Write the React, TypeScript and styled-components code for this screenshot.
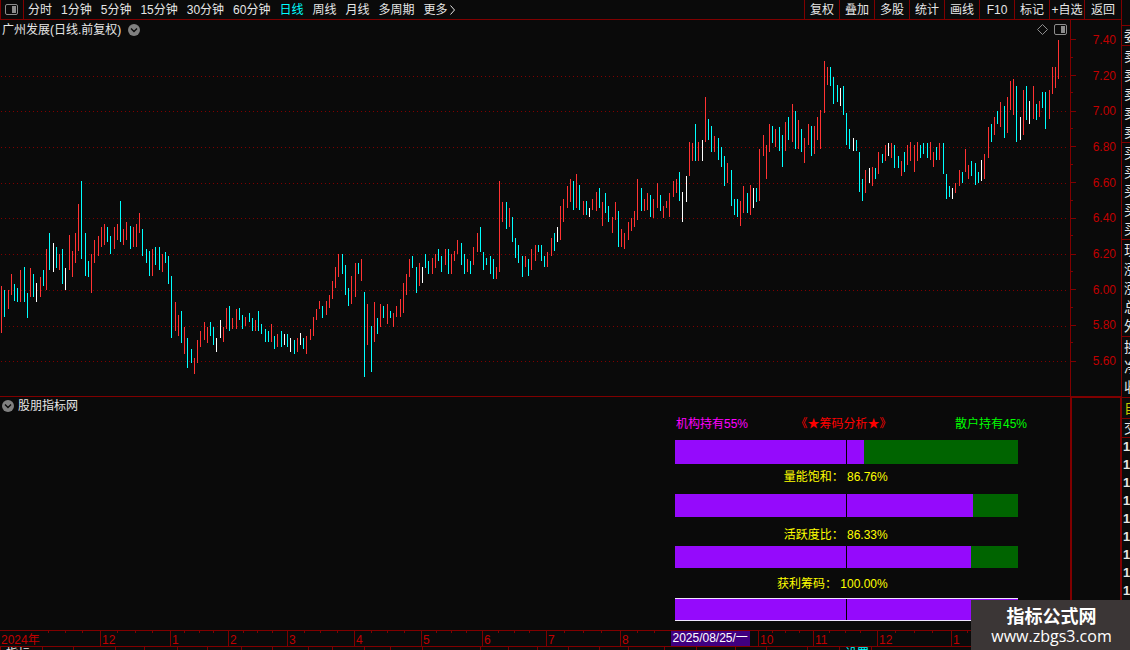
import React from 'react';
import styled, { createGlobalStyle } from 'styled-components';

const c = {
  bg: '#0a0a0a',
  line: '#800000',
  axis: '#c00000',
  text: '#e6e6e6',
  up: '#ff3232',
  down: '#00ffff',
  flat: '#ffffff',
  purple: '#950afc',
  green: '#006400',
};

const GlobalStyle = createGlobalStyle`
  *, *::before, *::after { box-sizing: border-box; }
  body {
    margin: 0;
    background: ${c.bg};
    color: ${c.text};
    font: 12px/18px "Liberation Sans", "Noto Sans CJK SC", sans-serif;
    overflow: hidden;
  }
  button { font: inherit; color: inherit; background: none; border: 0; padding: 0; margin: 0; white-space: nowrap; cursor: pointer; }
  svg { flex-shrink: 0; }
`;

const Page = styled.div`
  display: flex;
  height: 100vh;
  overflow: hidden;
`;

const Terminal = styled.main`
  flex: 1;
  min-width: 0;
  display: grid;
  grid-template-columns: minmax(0, 1fr);
  grid-template-rows: 20px minmax(0, 377fr) minmax(0, 233fr) 16px 4px;
`;

const Toolbar = styled.header`
  display: flex;
  border-bottom: 1px solid ${c.line};
  border-left: 1px solid ${c.line};
  min-width: 0;
`;

const PanelToggle = styled.button`
  width: 23px;
  padding-left: 4px;
  border-right: 1px solid ${c.line};
  display: flex;
  align-items: center;
`;

const Periods = styled.nav`
  display: flex;
  gap: 9px;
  padding-left: 4px;
  flex: 1;
`;

const Period = styled.button<{ $active?: boolean }>`
  display: flex;
  align-items: center;
  color: ${p => (p.$active ? c.down : c.text)};
`;

const Tools = styled.div`
  display: flex;
`;

const Tool = styled.button`
  width: 35px;
  border-left: 1px solid ${c.line};
  &:last-child { width: 37px; }
`;

const ChartRow = styled.section`
  display: flex;
  min-height: 0;
  border-bottom: 1px solid ${c.line};
`;

const Plot = styled.div`
  flex: 1;
  min-width: 0;
  display: flex;
  flex-direction: column;
`;

const PlotHeader = styled.div`
  display: flex;
  align-items: center;
  height: 20px;
  gap: 7px;
  padding: 0 3px 1px 2px;
`;

const Title = styled.h1`
  margin: 0;
  font-size: 12px;
  font-weight: 400;
  line-height: 18px;
`;

const HeaderIcons = styled.div`
  display: flex;
  align-items: center;
  gap: 6px;
  margin-left: auto;
`;

const PlotSvg = styled.svg`
  display: block;
  flex: 1;
  width: 100%;
  min-height: 0;
`;

const PriceAxis = styled.div`
  width: 51px;
  border-left: 1px solid ${c.line};
  display: grid;
  grid-template-rows: repeat(10, minmax(0, 1fr));
  padding: 2px 0 17px;
`;

const PriceRow = styled.div`
  position: relative;
  display: flex;
  align-items: center;
  justify-content: space-between;
  padding-right: 5px;
  color: ${c.axis};
  &::before {
    content: "";
    width: 5px;
    height: 1px;
    background: ${c.line};
  }
  &:not(:last-child)::after {
    content: "";
    position: absolute;
    left: 0;
    bottom: 0;
    width: 2px;
    height: 1px;
    background: ${c.line};
  }
`;

const IndicatorRow = styled.section`
  display: flex;
  min-height: 0;
`;

const Indicator = styled.div`
  flex: 1;
  min-width: 0;
  display: flex;
  justify-content: space-between;
  padding-right: 52px;
`;

const IndicatorTitle = styled.div`
  display: flex;
  align-items: center;
  height: 17px;
  gap: 4px;
  padding-left: 2px;
`;

const IndicatorSide = styled.div`
  width: 51px;
  border: solid ${c.line};
  border-width: 1px 1px 0 2px;
`;

const Chips = styled.div`
  width: 32%;
  min-width: 343px;
  padding-top: 18px;
`;

const ChipsHeader = styled.div`
  display: grid;
  grid-template-columns: 1fr auto 1fr;
  margin-right: -9px;
  height: 25px;
`;

const ChipText = styled.span<{ $color: string; $end?: boolean }>`
  color: ${p => p.$color};
  padding: 0 16px 0 1px;
  ${p => p.$end && 'padding: 0; justify-self: end;'}
`;

const Metric = styled.div<{ $height: number; $top: number }>`
  height: ${p => p.$height}px;
  padding-top: ${p => p.$top}px;
  padding-right: 38%;
  text-align: right;
  white-space: nowrap;
  color: #ffff00;
`;

const Bar = styled.div<{ $height: number; $framed?: boolean }>`
  position: relative;
  height: ${p => p.$height}px;
  background: ${c.green};
  border: solid #f0e6ff;
  border-width: ${p => (p.$framed ? '1px 0' : '0')};
  &::after {
    content: "";
    position: absolute;
    right: 50%;
    top: 0;
    bottom: 0;
    width: 1px;
    background: #000;
  }
`;

const Fill = styled.div`
  height: 100%;
  background: ${c.purple};
`;

const DateAxis = styled.div`
  position: relative;
  display: grid;
  grid-template-columns: 100fr 70fr 58fr 59fr 67fr 67fr 61fr 64fr 74fr 69fr 69fr 55fr 64fr 74fr 64fr 106fr;
  border-top: 1px solid ${c.line};
  color: ${c.axis};
  line-height: 14px;
`;

const Month = styled.div<{ $first?: boolean }>`
  min-width: 0;
  border-left: ${p => (p.$first ? '0' : `1px solid ${c.line}`)};
`;

const Ticks = styled.div<{ $first?: boolean }>`
  display: grid;
  grid-template-columns: repeat(4, 1fr);
  height: 2px;
  margin-left: ${p => (p.$first ? '32%' : '0')};
  span { border-right: 1px solid ${c.line}; }
  span:last-child { border-right: 0; }
`;

const MonthLabel = styled.div`
  padding-left: 1px;
  height: 13px;
  white-space: nowrap;
`;

const DateCursor = styled.div`
  position: absolute;
  left: 59.9%;
  top: 0;
  height: 15px;
  width: 79px;
  padding-left: 1px;
  background: #400080;
  color: #fff;
  white-space: nowrap;
  overflow: hidden;
`;

const TabStrip = styled.div`
  display: grid;
  grid-template-columns: 42fr 31fr 42fr 29fr 33fr 30fr 34fr 31fr 36fr 24fr 32fr 26fr 32fr 58fr 28fr 29fr 31fr 31fr 29fr 36fr 32fr 39fr 31fr 41fr 32fr 32fr 250fr;
  border-top: 1px solid ${c.line};
  overflow: hidden;
`;

const Tab = styled.div<{ $active?: boolean }>`
  min-width: 0;
  margin-top: -2px;
  padding-left: 5px;
  border-left: 1px solid ${c.line};
  white-space: nowrap;
  color: ${p => (p.$active ? c.down : c.text)};
`;

const Side = styled.aside`
  width: 9px;
  border-left: 1px solid ${c.line};
  padding-top: 25px;
  overflow: hidden;
  white-space: nowrap;
`;

const SideGroup = styled.div<{ $height: number; $color?: string }>`
  height: ${p => p.$height}px;
  display: flex;
  flex-direction: column;
  justify-content: space-around;
  padding-left: 2px;
  border-top: 1px solid ${c.line};
  color: ${p => p.$color || c.text};
  font-size: 14px;
`;

const Ones = styled.div`
  padding-left: 1px;
  border-top: 1px solid ${c.line};
  font: bold 13px/18px "Liberation Sans", sans-serif;
`;

const Watermark = styled.div`
  position: absolute;
  right: 0;
  bottom: 0;
  width: 159px;
  height: 50px;
  padding: 4px 0 0 2px;
  background: #3b3636;
  color: #fff;
  text-align: center;
`;

const MarkName = styled.div`
  font: bold 18px/22px "Noto Sans CJK SC", sans-serif;
`;

const MarkLink = styled.a`
  display: block;
  font: 16px/20px "Open Sans", sans-serif;
  color: inherit;
  text-decoration: none;
`;

/* One bar per day: x, high, low, kind (r = up, c = down, w = unchanged). */
const DATA = `
1 286 333 r,4 290 317 c,8 290 309 r,11 274 295 r,14 284 301 c,17 288 302 c,20 270 302 r,24 267 302 c,
27 293 318 c,30 268 297 r,33 274 297 c,36 283 302 w,40 277 297 r,43 270 286 c,46 249 290 r,49 233 270 c,
53 243 272 w,56 247 268 c,59 254 270 r,62 249 284 c,65 268 290 w,69 235 270 r,72 251 277 r,75 233 263 r,
78 204 251 r,81 181 259 c,85 233 276 c,88 261 277 c,91 254 293 r,94 240 263 r,98 236 256 r,101 227 247 r,
104 224 245 r,107 227 242 c,110 236 254 c,114 227 249 r,117 224 240 r,120 201 242 c,123 229 245 r,126 222 240 r,
130 226 249 c,133 227 247 r,136 224 247 r,139 213 233 r,142 229 256 c,146 249 263 c,149 251 276 c,152 249 276 r,
155 247 265 c,159 247 270 c,162 254 272 r,165 252 263 c,168 256 284 c,171 276 338 c,175 302 331 r,178 315 336 r,
181 311 343 c,184 327 354 r,187 338 368 c,191 349 363 c,194 358 374 r,197 340 363 r,200 331 347 r,204 322 340 r,
207 327 343 r,210 322 336 c,213 327 345 c,216 338 352 w,220 320 338 w,223 327 342 r,226 308 329 r,229 306 331 c,
232 318 329 r,236 309 329 r,239 308 320 c,242 315 329 c,245 317 326 r,249 313 322 c,252 318 331 c,255 320 331 r,
258 311 331 c,261 324 334 c,265 329 342 c,268 331 342 c,271 324 342 r,274 336 349 c,277 334 347 r,281 331 347 c,
284 334 345 w,287 334 347 c,290 338 352 w,294 340 354 c,297 338 352 r,300 333 345 w,303 338 349 c,306 336 354 r,
310 329 340 r,313 317 336 r,316 309 320 r,319 301 309 r,322 306 318 c,326 301 315 r,329 295 308 r,332 281 299 r,
335 267 288 r,338 254 277 r,342 254 274 c,345 265 295 c,348 288 306 c,351 276 304 r,355 263 297 r,358 263 274 c,
361 259 281 r,364 292 377 c,367 304 345 r,371 326 372 c,374 302 342 r,377 318 334 c,380 304 327 r,383 306 318 c,
387 304 324 r,390 311 318 c,393 313 327 r,396 306 317 r,400 299 317 r,403 283 313 r,406 274 295 r,409 259 277 r,
412 256 268 c,416 267 293 c,419 263 286 r,422 267 283 w,425 254 268 c,428 261 274 c,432 258 274 r,435 254 268 r,
438 249 261 c,441 256 272 c,445 249 265 r,448 249 274 c,451 254 274 r,454 251 261 r,457 240 254 r,461 243 265 c,
464 254 274 c,467 259 272 r,470 261 274 c,473 247 265 r,477 233 252 r,480 227 252 c,483 252 270 c,486 258 265 c,
490 256 274 c,493 259 279 c,496 267 279 r,499 181 272 r,502 202 222 r,506 202 229 c,509 208 227 r,512 217 242 c,
515 238 258 c,518 245 263 c,522 256 277 c,525 256 267 r,528 259 276 c,531 249 270 r,535 245 261 r,538 245 252 c,
541 245 261 c,544 256 267 c,547 252 267 r,551 238 256 r,554 233 251 c,557 227 242 w,560 206 240 r,563 199 222 r,
567 186 208 r,570 179 202 r,573 181 210 c,576 174 208 r,579 185 210 c,583 201 215 r,586 201 215 c,589 208 217 w,
592 199 210 r,596 192 211 r,599 188 208 c,602 202 226 r,605 193 213 c,608 206 222 c,612 217 233 r,615 202 220 r,
618 211 247 c,621 229 247 r,624 233 249 r,628 222 240 r,631 218 231 r,634 211 227 r,637 179 220 r,641 188 211 c,
644 199 211 r,647 193 210 r,650 195 217 c,653 199 218 r,657 183 208 r,660 195 211 c,663 206 218 r,666 201 208 r,
669 193 217 r,673 181 197 r,676 179 193 r,679 172 201 c,682 192 222 w,686 176 202 w,689 142 176 r,692 143 161 r,
695 124 161 c,698 142 161 r,702 140 161 w,705 97 142 r,708 119 140 c,711 126 152 c,714 136 152 r,718 138 160 c,
721 147 167 c,724 156 186 c,727 163 183 r,731 170 206 c,734 199 215 c,737 199 217 c,740 201 226 r,743 186 213 r,
747 193 213 c,750 185 215 r,753 188 208 w,756 188 202 c,759 149 201 r,763 135 156 r,766 145 179 r,769 124 152 r,
772 126 143 c,775 129 147 r,779 127 151 c,782 135 167 c,785 122 151 r,788 117 140 c,792 104 142 r,795 111 149 c,
798 120 149 r,801 129 152 c,804 138 163 r,808 124 145 r,811 126 156 c,814 126 154 r,817 117 140 r,820 110 149 r,
824 61 113 r,827 67 85 r,830 67 86 c,833 77 104 c,837 85 102 c,840 88 106 w,843 86 115 c,846 113 145 c,
849 129 149 c,853 138 151 w,856 140 151 c,859 152 192 c,862 179 201 c,865 170 193 r,869 168 183 w,872 167 186 r,
875 168 179 c,878 152 174 r,882 154 163 c,885 145 161 r,888 143 156 w,891 143 158 r,894 145 168 c,898 156 168 c,
901 161 176 r,904 152 172 c,907 145 165 r,910 142 161 r,914 145 172 r,917 142 161 r,920 145 158 c,923 143 154 c,
927 143 158 c,930 142 160 r,933 152 167 r,936 147 160 c,939 143 160 r,943 143 174 c,946 174 199 c,949 186 197 c,
952 188 199 w,955 183 193 r,959 170 186 r,962 172 183 c,965 149 172 r,968 165 179 r,971 161 176 c,975 163 185 c,
978 172 183 c,981 160 181 w,984 154 179 r,988 127 158 r,991 124 142 c,994 117 135 r,997 111 124 c,1000 102 127 r,
1004 106 138 c,1007 97 133 r,1010 81 110 r,1013 79 115 r,1016 86 142 c,1020 117 140 w,1023 90 135 r,1026 86 120 c,
1029 101 124 w,1033 86 119 r,1036 104 120 c,1039 101 117 r,1042 92 108 c,1045 92 129 c,1049 90 119 r,1052 67 94 r,
1055 67 88 r,1058 40 79 r`;

const DAYS = DATA.split(',').map(row => {
  const [x, high, low, kind] = row.trim().split(' ');
  return { x: +x, high: +high, low: +low, kind };
});

const KIND_COLOR: Record<string, string> = { r: c.up, c: c.down, w: c.flat };
const GRID = [76, 111, 147, 183, 218, 254, 290, 326, 361];
const PRICES = ['7.40', '7.20', '7.00', '6.80', '6.60', '6.40', '6.20', '6.00', '5.80', '5.60'];
const PERIODS = ['分时', '1分钟', '5分钟', '15分钟', '30分钟', '60分钟', '日线', '周线', '月线', '多周期'];
const TOOLS = ['复权', '叠加', '多股', '统计', '画线', 'F10', '标记', '+自选', '返回'];
const MONTHS = ['2024年', '12', '1', '2', '3', '4', '5', '6', '7', '8', '', '10', '11', '12', '1', ''];
const TAB_COUNT = 27;
const TAB_LABELS: Record<number, string> = { 0: '指标', 25: '设置' };

const PanelIcon = () => (
  <svg width="13" height="11" viewBox="0 0 13 11" aria-hidden="true">
    <rect x="0.5" y="0.5" width="12" height="10" rx="1.5" fill="none" stroke="#8c8c8c" />
    <rect x="7" y="2" width="4" height="7" fill="#8c8c8c" />
  </svg>
);

const DropIcon = () => (
  <svg width="12" height="12" viewBox="0 0 12 12" aria-hidden="true">
    <circle cx="6" cy="6" r="6" fill="#808080" />
    <path d="M3 4.5 L6 7.5 L9 4.5" fill="none" stroke="#0a0a0a" strokeWidth="1.4" />
  </svg>
);

const DiamondIcon = () => (
  <svg width="11" height="11" viewBox="0 0 11 11" aria-hidden="true">
    <path d="M5.5 0.5 L10.5 5.5 L5.5 10.5 L0.5 5.5 Z" fill="none" stroke="#8c8c8c" />
  </svg>
);

const MoreIcon = () => (
  <svg width="8" height="10" viewBox="0 0 8 10" aria-hidden="true">
    <path d="M2.5 0.5 L6.5 5 L2.5 9.5" fill="none" stroke="#e6e6e6" />
  </svg>
);

export default function App() {
  return (
    <Page>
      <GlobalStyle />
      <Terminal>
        <Toolbar>
          <PanelToggle aria-label="面板"><PanelIcon /></PanelToggle>
          <Periods>
            {PERIODS.map(p => <Period key={p} $active={p === '日线'}>{p}</Period>)}
            <Period>更多<MoreIcon /></Period>
          </Periods>
          <Tools>{TOOLS.map(t => <Tool key={t}>{t}</Tool>)}</Tools>
        </Toolbar>

        <ChartRow>
          <Plot>
            <PlotHeader>
              <Title>广州发展(日线.前复权)</Title>
              <DropIcon />
              <HeaderIcons><DiamondIcon /><PanelIcon /></HeaderIcons>
            </PlotHeader>
            <PlotSvg viewBox="0 40 1070 356" preserveAspectRatio="none" shapeRendering="crispEdges">
              {GRID.map(y => (
                <line key={y} x1="1" x2="1067" y1={y + 0.5} y2={y + 0.5} stroke={c.line} strokeDasharray="1 3" />
              ))}
              {DAYS.map(d => (
                <rect key={d.x} x={d.x} y={d.high} width="1" height={d.low - d.high} fill={KIND_COLOR[d.kind]} />
              ))}
            </PlotSvg>
          </Plot>
          <PriceAxis>{PRICES.map(p => <PriceRow key={p}>{p}</PriceRow>)}</PriceAxis>
        </ChartRow>

        <IndicatorRow>
          <Indicator>
            <IndicatorTitle><DropIcon />股朋指标网</IndicatorTitle>
            <Chips>
              <ChipsHeader>
                <ChipText $color="#ff00ff">机构持有55%</ChipText>
                <ChipText $color="#ff0000">《★筹码分析★》</ChipText>
                <ChipText $color="#00ff00" $end>散户持有45%</ChipText>
              </ChipsHeader>
              <Bar $height={24}><Fill style={{ width: '55%' }} /></Bar>
              <Metric $height={30} $top={4}>量能饱和： 86.76%</Metric>
              <Bar $height={23}><Fill style={{ width: '86.76%' }} /></Bar>
              <Metric $height={29} $top={9}>活跃度比： 86.33%</Metric>
              <Bar $height={22}><Fill style={{ width: '86.33%' }} /></Bar>
              <Metric $height={30} $top={7}>获利筹码： 100.00%</Metric>
              <Bar $height={23} $framed><Fill style={{ width: '100%' }} /></Bar>
            </Chips>
          </Indicator>
          <IndicatorSide />
        </IndicatorRow>

        <DateAxis>
          {MONTHS.map((m, i) => (
            <Month key={i} $first={i === 0}>
              <Ticks $first={i === 0}><span /><span /><span /><span /></Ticks>
              <MonthLabel>{m}</MonthLabel>
            </Month>
          ))}
          <DateCursor>2025/08/25/一</DateCursor>
        </DateAxis>

        <TabStrip>
          {Array.from({ length: TAB_COUNT }, (_, i) => <Tab key={i} $active={i === 25}>{TAB_LABELS[i]}</Tab>)}
        </TabStrip>
      </Terminal>

      <Side>
        <SideGroup $height={20}><span>委</span></SideGroup>
        <SideGroup $height={97}>{[1, 2, 3, 4, 5].map(n => <span key={n}>卖</span>)}</SideGroup>
        <SideGroup $height={97}>{[1, 2, 3, 4, 5].map(n => <span key={n}>买</span>)}</SideGroup>
        <SideGroup $height={97}><span>现</span><span>涨</span><span>涨</span><span>总</span><span>外</span></SideGroup>
        <SideGroup $height={61}><span>换</span><span>净</span><span>收</span></SideGroup>
        <SideGroup $height={21} $color="#c8c800"><span>自</span></SideGroup>
        <SideGroup $height={19}><span>交</span></SideGroup>
        <Ones>{Array.from({ length: 9 }, (_, i) => <div key={i}>1</div>)}</Ones>
      </Side>

      <Watermark>
        <MarkName>指标公式网</MarkName>
        <MarkLink href="#">www.zbgs3.com</MarkLink>
      </Watermark>
    </Page>
  );
}
